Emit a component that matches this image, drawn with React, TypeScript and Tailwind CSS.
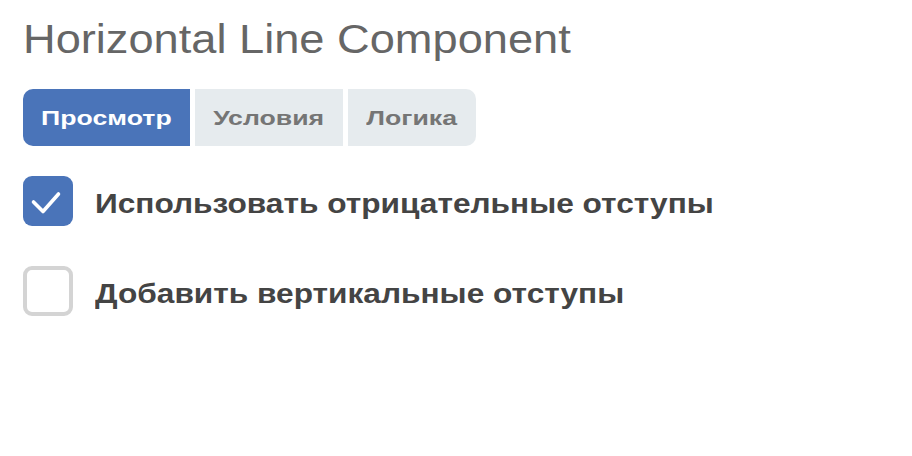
import { useState } from 'react'

type Tab = { id: string; label: string; width: string }

const tabs: Tab[] = [
  { id: 'preview', label: 'Просмотр', width: 'w-[167px]' },
  { id: 'conditions', label: 'Условия', width: 'w-[148px]' },
  { id: 'logic', label: 'Логика', width: 'w-[128px]' },
]

const options = [
  { id: 'negative', label: 'Использовать отрицательные отступы', checked: true },
  { id: 'vertical', label: 'Добавить вертикальные отступы', checked: false },
]

function CheckBox({ checked }: { checked: boolean }) {
  if (checked) {
    return (
      <span className="block h-[50px] w-[50px] shrink-0 rounded-[9px] bg-[#4a74b9]">
        <svg width="50" height="50" viewBox="0 0 50 50" fill="none" aria-hidden="true">
          <path d="M10.5 26 L20 35.5 L35.5 18" stroke="#fff" strokeWidth="3.6" strokeLinecap="round" strokeLinejoin="round" />
        </svg>
      </span>
    )
  }
  return <span className="block h-[50px] w-[50px] shrink-0 rounded-[9px] border-4 border-[#d4d4d4] bg-white" />
}

export default function App() {
  const [active, setActive] = useState('preview')

  return (
    <div className="min-h-[456px] bg-white pl-[23px] pt-[19px] font-[Liberation_Sans,Arial,sans-serif]">
      <h1 className="text-[40px] font-normal leading-none text-[#666666]">
        <span className="inline-block origin-left scale-x-[1.13]">Horizontal Line Component</span>
      </h1>

      <div className="mt-[30px] flex gap-[5px]">
        {tabs.map((tab, index) => {
          const isActive = tab.id === active
          return (
            <button
              key={tab.id}
              type="button"
              onClick={() => setActive(tab.id)}
              className={`flex h-[57px] items-center justify-center font-[Liberation_Sans,Arial,sans-serif] text-[21px] font-bold ${tab.width} ${isActive ? 'bg-[#4a74b9] text-white' : 'bg-[#e6ebee] text-[#757575]'} ${index === 0 ? 'rounded-l-[10px]' : ''} ${index === tabs.length - 1 ? 'rounded-r-[10px]' : ''}`}
            >
              <span className="inline-block scale-x-[1.27]">{tab.label}</span>
            </button>
          )
        })}
      </div>

      <div className="mt-[30px] flex flex-col gap-[40px]">
        {options.map((option) => (
          <label key={option.id} className="flex items-center gap-[22px]">
            <CheckBox checked={option.checked} />
            <span className="inline-block origin-left scale-x-[1.13] pt-[6px] text-[28px] font-bold leading-none text-[#444444]">
              {option.label}
            </span>
          </label>
        ))}
      </div>
    </div>
  )
}
